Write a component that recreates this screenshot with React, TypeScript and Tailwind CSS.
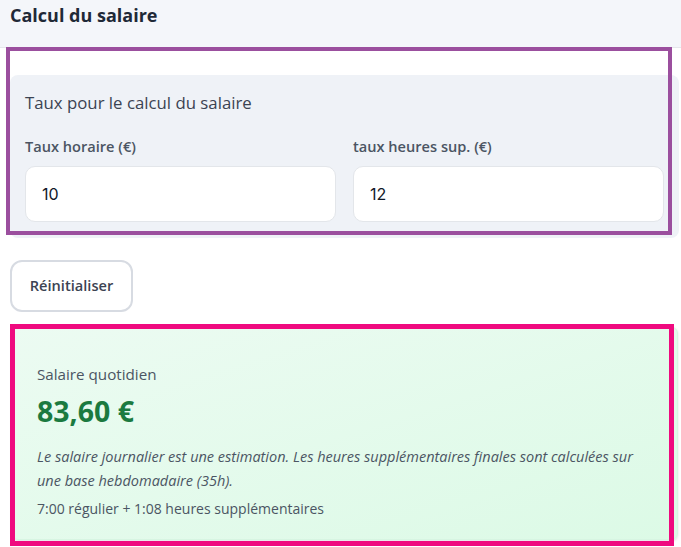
export default function App() {
  return (
    <div className="min-h-[547px] w-[681px] overflow-hidden bg-white font-['Open_Sans',sans-serif] text-[#374151]">
      {/* Header */}
      <header className="h-[48px] border-b border-[#e5e7eb] bg-[#f4f6fa] pl-[10px] pt-[3px]">
        <h1 className="text-[18px] font-bold leading-[24px] text-[#1f2937]">Calcul du salaire</h1>
      </header>

      {/* Rates */}
      <section className="relative ml-[10px] mr-[2px] pt-[27px]">
        <div className="rounded-lg bg-[#eff2f7] px-[15px] pb-[16px] pt-[16px]">
          <h2 className="text-[16.8px] leading-[24px] text-[#3b4352]">Taux pour le calcul du salaire</h2>
          <div className="mt-[21px] grid grid-cols-2 gap-[17px]">
            <RateField label="Taux horaire (€)" value="10" />
            <RateField label="taux heures sup. (€)" value="12" />
          </div>
        </div>
        <div className="pointer-events-none absolute left-[-4px] top-[-1px] h-[188px] w-[666px] border-[4px] border-[#9b4f9e]" />
      </section>

      {/* Reset */}
      <div className="ml-[10px] mt-[22px]">
        <button className="h-[52px] w-[123px] rounded-xl border-2 border-[#d7dbe2] bg-white text-[14.6px] font-semibold text-[#3b4352]">
          Réinitialiser
        </button>
      </div>

      {/* Result */}
      <section className="relative ml-[12px] mr-[3px] mt-[15px]">
        <div className="rounded-md border border-[#d7f5e2] bg-gradient-to-br from-[#ecfbf2] to-[#dcfae6] pb-[20px] pl-[24px] pr-[20px] pt-[35px] shadow-sm">
          <p className="text-[15.2px] leading-[22px] text-[#4b5563]">Salaire quotidien</p>
          <p className="mt-[8px] text-[28.5px] font-bold leading-[36px] text-[#1b7a40]">83,60 €</p>
          <p className="mt-[16px] text-[14.5px] italic leading-[24px] text-[#4b5563]">
            Le salaire journalier est une estimation. Les heures supplémentaires finales sont calculées sur une base
            hebdomadaire (35h).
          </p>
          <p className="mt-[6px] text-[14px] leading-[20px] text-[#4b5563]">7:00 régulier + 1:08 heures supplémentaires</p>
        </div>
        <div className="pointer-events-none absolute left-[-2px] top-[-3px] h-[222px] w-[664px] border-[5px] border-[#ef0a7f]" />
      </section>
    </div>
  );
}

function RateField({ label, value }: { label: string; value: string }) {
  return (
    <label className="flex flex-col">
      <span className="text-[14.6px] font-semibold leading-[20px] text-[#4b5563]">{label}</span>
      <input
        readOnly
        value={value}
        className="mt-[10px] h-[56px] rounded-[10px] border border-[#e3e6ea] bg-white px-[16px] font-['Inter',sans-serif] text-[16px] text-[#111827] outline-none"
      />
    </label>
  );
}
